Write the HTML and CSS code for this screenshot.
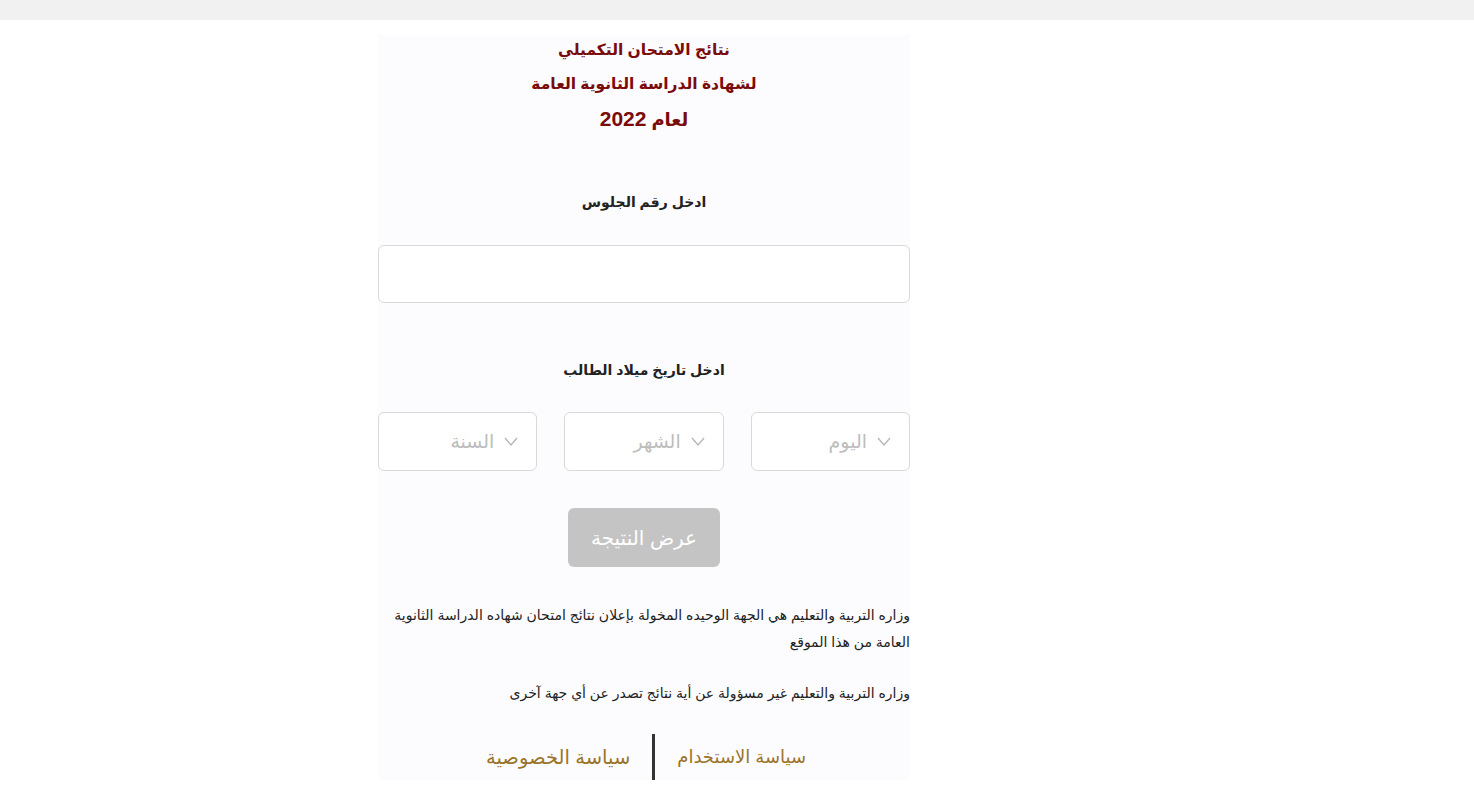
FILE: index.html
```html
<!DOCTYPE html>
<html lang="ar" dir="rtl">
<head>
<meta charset="utf-8">
<title>نتائج الامتحان التكميلي</title>
<link rel="stylesheet" href="styles.css">
</head>
<body>
<div class="topbar"></div>
<div class="layout">
  <main class="panel">
    <h1 class="title">
      <span class="t-line">نتائج الامتحان التكميلي</span>
      <span class="t-line">لشهادة الدراسة الثانوية العامة</span>
      <span class="t-line t-year">لعام <span class="t-num">2022</span></span>
    </h1>

    <label class="label" for="seat">ادخل رقم الجلوس</label>
    <input class="seat" id="seat" type="text">

    <div class="label label-2">ادخل تاريخ ميلاد الطالب</div>
    <div class="dates">
      <div class="select">
        <svg class="chev" viewBox="0 0 14 9" width="14" height="9"><polyline points="1,1 7,8 13,1" fill="none" stroke="#b5b5b5" stroke-width="1.3"/></svg>
        <span>اليوم</span>
      </div>
      <div class="select">
        <svg class="chev" viewBox="0 0 14 9" width="14" height="9"><polyline points="1,1 7,8 13,1" fill="none" stroke="#b5b5b5" stroke-width="1.3"/></svg>
        <span>الشهر</span>
      </div>
      <div class="select">
        <svg class="chev" viewBox="0 0 14 9" width="14" height="9"><polyline points="1,1 7,8 13,1" fill="none" stroke="#b5b5b5" stroke-width="1.3"/></svg>
        <span>السنة</span>
      </div>
    </div>

    <div class="btn-row"><button class="btn" type="button">عرض النتيجة</button></div>

    <p class="note note-1">وزاره التربية والتعليم هي الجهة الوحيده المخولة بإعلان نتائج امتحان شهاده الدراسة الثانوية العامة من هذا الموقع</p>
    <p class="note note-2">وزاره التربية والتعليم غير مسؤولة عن أية نتائج تصدر عن أي جهة آخرى</p>

    <nav class="footer">
      <a class="flink" href="#">سياسة الاستخدام</a>
      <span class="divider"></span>
      <a class="flink flink-2" href="#">سياسة الخصوصية</a>
    </nav>
  </main>
</div>
</body>
</html>
```

FILE: styles.css
```css
* { box-sizing: border-box; }

html, body {
  margin: 0;
  padding: 0;
  background: #ffffff;
  font-family: "Liberation Sans", "DejaVu Sans", Arial, sans-serif;
}

.topbar {
  height: 20px;
  background: #f1f1f1;
}

.layout {
  direction: ltr;
  display: grid;
  grid-template-columns: 378px 532px 1fr;
  padding-top: 15px;
}

.panel {
  direction: rtl;
  grid-column: 2;
  background: #fcfcfe;
  display: flex;
  flex-direction: column;
}

.panel > * { flex: none; }

.title {
  margin: -2px 0 0 0;
  text-align: center;
  color: #7a0b0b;
  font-weight: bold;
  font-size: 15.5px;
  line-height: 34px;
}

.t-line { display: block; }
.t-year { font-size: 18px; line-height: 36px; }
.t-num { font-size: 21px; }

.label {
  display: block;
  margin-top: 54px;
  text-align: center;
  font-weight: bold;
  font-size: 14px;
  line-height: 20px;
  color: #222;
}

.seat {
  margin-top: 33px;
  width: 100%;
  height: 58px;
  border: 1px solid #d9d9d9;
  border-radius: 6px;
  background: #fff;
}

.label-2 { margin-top: 57px; }

.dates {
  margin-top: 32px;
  display: grid;
  grid-template-columns: repeat(3, 1fr);
  gap: 27px;
}

.select {
  height: 59px;
  border: 1px solid #d9d9d9;
  border-radius: 6px;
  background: #fff;
  display: flex;
  align-items: center;
  gap: 10px;
  padding: 0 18px;
  color: #bdbdbd;
  font-size: 19px;
}

.chev { flex: none; }

.btn-row {
  margin-top: 37px;
  display: flex;
  justify-content: center;
}

.btn {
  width: 152px;
  height: 59px;
  border: none;
  border-radius: 6px;
  background: #c4c4c4;
  color: #ffffff;
  font-family: inherit;
  font-size: 20px;
}

.note {
  margin: 0;
  font-size: 14px;
  line-height: 27px;
  color: #222;
  text-align: right;
}

.note-1 { margin-top: 35px; }
.note-2 { margin-top: 24px; }

.footer {
  margin-top: 27px;
  display: flex;
  justify-content: center;
  align-items: center;
  gap: 22px;
  padding-left: 4px;
}

.flink {
  color: #9a7428;
  text-decoration: none;
  font-size: 18px;
}

.flink-2 { font-size: 19.5px; }

.divider {
  width: 3px;
  height: 46px;
  background: #333;
}
```
